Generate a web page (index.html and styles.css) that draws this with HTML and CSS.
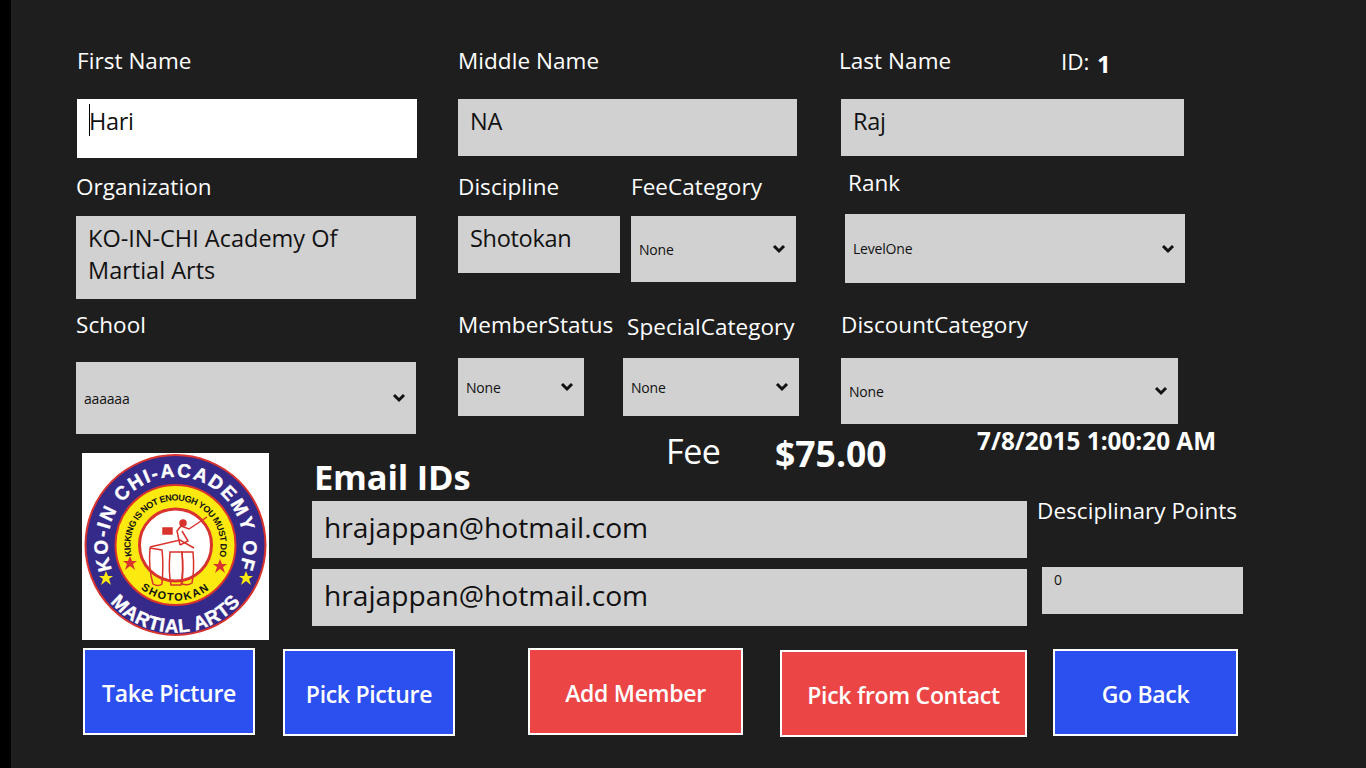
FILE: index.html
```html
<!DOCTYPE html>
<html lang="en">
<head>
    <meta charset="UTF-8">
    <meta name="viewport" content="width=device-width, initial-scale=1.0">
    <title>Member Details</title>
    <link rel="stylesheet" href="styles.css">
</head>
<body>
    <main class="page">
        <section class="form-top">
            <div class="col col-one">
                <label class="label first-label">First Name</label>
                <input class="text-box first-box" value="Hari">
                <label class="label org-label">Organization</label>
                <textarea class="text-box org-box">KO-IN-CHI Academy Of Martial Arts</textarea>
                <label class="label school-label">School</label>
                <div class="select school-select">
                    <select><option>aaaaaa</option></select>
                    <svg class="chevron" viewBox="0 0 14 10"><path d="M2 2l5 5 5-5"></path></svg>
                </div>
            </div>

            <div class="col col-two">
                <label class="label">Middle Name</label>
                <input class="text-box middle-box" value="NA">
                <div class="pair discipline-pair">
                    <div class="pair-left">
                        <label class="label">Discipline</label>
                        <input class="text-box discipline-box" value="Shotokan">
                    </div>
                    <div>
                        <label class="label">FeeCategory</label>
                        <div class="select fee-select">
                            <select><option>None</option></select>
                            <svg class="chevron" viewBox="0 0 14 10"><path d="M2 2l5 5 5-5"></path></svg>
                        </div>
                    </div>
                </div>
                <div class="pair status-pair">
                    <div class="status-col">
                        <label class="label">MemberStatus</label>
                        <div class="select status-select">
                            <select><option>None</option></select>
                            <svg class="chevron" viewBox="0 0 14 10"><path d="M2 2l5 5 5-5"></path></svg>
                        </div>
                    </div>
                    <div>
                        <label class="label special-label">SpecialCategory</label>
                        <div class="select special-select">
                            <select><option>None</option></select>
                            <svg class="chevron" viewBox="0 0 14 10"><path d="M2 2l5 5 5-5"></path></svg>
                        </div>
                    </div>
                </div>
            </div>

            <div class="col col-three">
                <div class="name-row">
                    <label class="label last-label">Last Name</label>
                    <span class="id-label">ID:</span>
                    <span class="id-value">1</span>
                </div>
                <input class="text-box last-box" value="Raj">
                <label class="label rank-label">Rank</label>
                <div class="select rank-select">
                    <select><option>LevelOne</option></select>
                    <svg class="chevron" viewBox="0 0 14 10"><path d="M2 2l5 5 5-5"></path></svg>
                </div>
                <label class="label discount-label">DiscountCategory</label>
                <div class="select discount-select">
                    <select><option>None</option></select>
                    <svg class="chevron" viewBox="0 0 14 10"><path d="M2 2l5 5 5-5"></path></svg>
                </div>
            </div>
        </section>

        <section class="form-bottom">
            <svg class="logo" viewBox="0 0 187 187" role="img" aria-label="KO-IN CHI Academy of Martial Arts">
                <defs>
                    <path id="arcTop" d="M 30.7 118 A 68 68 0 1 1 156.3 118"></path>
                    <path id="arcBottom" d="M 13 122 A 85 85 0 0 0 174 122"></path>
                    <path id="arcInnerTop" d="M 50 104 A 45 45 0 1 1 137 104"></path>
                    <path id="arcInnerBottom" d="M 50 127 A 56 56 0 0 0 137 127"></path>
                    <polygon id="star" points="0,-7 2,-2 7,-2 3,1 5,7 0,3 -5,7 -3,1 -7,-2 -2,-2"></polygon>
                </defs>
                <rect width="187" height="187" fill="#fff"></rect>
                <circle cx="93.5" cy="92" r="90" fill="#35298a" stroke="#d9332e" stroke-width="2"></circle>
                <circle cx="93.5" cy="92" r="60" fill="#fbe90f" stroke="#d9332e" stroke-width="2"></circle>
                <circle cx="93.5" cy="92" r="36" fill="#fff" stroke="#d9332e" stroke-width="3"></circle>
                <text class="logo-ring logo-ring-top"><textPath href="#arcTop" startOffset="50%" text-anchor="middle">KO-IN CHI-ACADEMY OF</textPath></text>
                <text class="logo-ring"><textPath href="#arcBottom" startOffset="50%" text-anchor="middle">MARTIAL ARTS</textPath></text>
                <text class="logo-motto"><textPath href="#arcInnerTop" startOffset="50%" text-anchor="middle">KICKING IS NOT ENOUGH YOU MUST DO</textPath></text>
                <text class="logo-style"><textPath href="#arcInnerBottom" startOffset="50%" text-anchor="middle">SHOTOKAN</textPath></text>
                <use href="#star" x="24" y="125" fill="#fbe90f"></use>
                <use href="#star" x="164" y="125" fill="#fbe90f"></use>
                <use href="#star" x="48" y="110" fill="#d9332e"></use>
                <use href="#star" x="138" y="113" fill="#d9332e"></use>
                <g class="logo-sketch">
                    <path d="M68 95c-1 12 0 26 3 36 3 2 7 2 9 0 1-12 1-26 0-34z"></path>
                    <path d="M88 99c-1 12-1 24 1 33h10c2-10 2-22 1-33z"></path>
                    <path d="M100 99c1 12 1 22 0 32 3 1 7 1 10-1 2-10 2-20 1-31z"></path>
                    <path d="M68 94l30-7 14 8"></path>
                    <path d="M98 92l-3-14 4-5 8 3 18-12"></path>
                    <path d="M100 78l6 10-8 4"></path>
                    <circle class="logo-head" cx="101" cy="70" r="3"></circle>
                    <rect class="logo-head" x="81" y="75" width="9" height="6"></rect>
                </g>
            </svg>

            <div class="details">
                <div class="summary">
                    <h2 class="email-title">Email IDs</h2>
                    <span class="fee-label">Fee</span>
                    <span class="fee-value">$75.00</span>
                    <span class="stamp">7/8/2015 1:00:20 AM</span>
                </div>
                <div class="contact-row">
                    <div class="email-list">
                        <input class="text-box email-box" value="hrajappan@hotmail.com">
                        <input class="text-box email-box" value="hrajappan@hotmail.com">
                    </div>
                    <div class="points">
                        <label class="label">Desciplinary Points</label>
                        <input class="text-box points-box" value="0">
                    </div>
                </div>
            </div>
        </section>

        <section class="actions">
            <button class="action blue take-btn">Take Picture</button>
            <button class="action blue pick-btn">Pick Picture</button>
            <button class="action red add-btn">Add Member</button>
            <button class="action red contact-btn">Pick from Contact</button>
            <button class="action blue back-btn">Go Back</button>
        </section>
    </main>
</body>
</html>
```

FILE: styles.css
```css
:root {
    --page-bg: #1e1e1e;
    --box-bg: #d1d1d1;
    --box-text: #111;
    --blue: #2c50f0;
    --red: #ec4545;
}

* {
    margin: 0;
    padding: 0;
    box-sizing: border-box;
}

body {
    font-family: 'Open Sans', 'Noto Sans', Arial, sans-serif;
    background-color: var(--page-bg);
    color: #fff;
    height: 768px;
    overflow: hidden;
}

.page {
    height: 768px;
    border-left: 11px solid #000;
}

/* top three columns */
.form-top {
    display: flex;
    height: 434px;
    padding: 46px 0 0 65px;
}

.col {
    display: flex;
    flex-direction: column;
    align-items: flex-start;
}

.col-one {
    width: 382px;
}

.col-two {
    width: 381px;
}

.label {
    display: block;
    font-size: 22.5px;
    line-height: 30px;
    height: 30px;
    white-space: nowrap;
    letter-spacing: 0.05px;
}

.text-box {
    display: block;
    border: none;
    border-radius: 0;
    outline: none;
    resize: none;
    overflow: hidden;
    background-color: var(--box-bg);
    color: var(--box-text);
    font-family: inherit;
    font-size: 23.5px;
    letter-spacing: -0.3px;
    padding: 0 12px 13px;
    height: 57px;
}

.first-label {
    margin-left: 1px;
}

.first-box {
    margin: 23px 0 0 1px;
    width: 340px;
    height: 59px;
    padding-bottom: 15px;
    background: linear-gradient(#000, #000) no-repeat 12px 5px / 1px 32px, #fff;
}

.org-label {
    margin-top: 14px;
}

.org-box {
    margin-top: 14px;
    width: 340px;
    height: 83px;
    line-height: 32px;
    letter-spacing: 0;
    padding: 6px 12px 0;
}

.school-label {
    margin-top: 11px;
}

/* dropdowns */
.select {
    position: relative;
}

.select select {
    display: block;
    width: 100%;
    height: 100%;
    border: none;
    border-radius: 0;
    outline: none;
    appearance: none;
    background-color: var(--box-bg);
    color: var(--box-text);
    font-family: inherit;
    font-size: 14px;
    letter-spacing: -0.2px;
    padding-left: 8px;
}

.chevron {
    position: absolute;
    top: 50%;
    right: 10px;
    width: 14px;
    height: 10px;
    margin-top: -5px;
    fill: none;
    stroke: #111;
    stroke-width: 3;
    pointer-events: none;
}

.school-select {
    margin-top: 22px;
    width: 340px;
    height: 72px;
}

.middle-box {
    margin-top: 23px;
    width: 339px;
}

.pair {
    display: flex;
}

.discipline-pair {
    margin-top: 16px;
}

.pair-left {
    width: 173px;
}

.discipline-box {
    margin-top: 14px;
    width: 162px;
}

.fee-select {
    margin-top: 14px;
    width: 165px;
    height: 66px;
}

.status-pair {
    margin-top: 28px;
}

.status-col {
    width: 165px;
}

.status-select {
    margin-top: 18px;
    width: 126px;
    height: 58px;
}

.special-label {
    margin: 2px 0 0 4px;
}

.special-select {
    margin-top: 16px;
    width: 176px;
    height: 58px;
}

.name-row {
    display: flex;
    align-items: center;
    height: 30px;
}

.last-label {
    width: 222px;
}

.id-label {
    font-size: 22.5px;
    width: 36px;
}

.id-value {
    font-size: 24px;
    font-weight: 700;
    margin-top: 5px;
}

.last-box {
    margin: 23px 0 0 2px;
    width: 343px;
}

.rank-label {
    margin: 12px 0 0 9px;
}

.rank-select {
    margin: 16px 0 0 6px;
    width: 340px;
    height: 69px;
}

.discount-label {
    margin: 27px 0 0 2px;
}

.discount-select {
    margin: 18px 0 0 2px;
    width: 337px;
    height: 66px;
}

/* logo, email ids and fee */
.form-bottom {
    display: flex;
    height: 214px;
    padding-left: 71px;
}

.logo {
    width: 187px;
    height: 187px;
    margin-top: 19px;
    flex: none;
}

.logo-ring {
    font-family: 'Liberation Sans', Arial, sans-serif;
    font-size: 19px;
    font-weight: 700;
    fill: #fff;
    stroke: #fff;
    stroke-width: 0.4;
    letter-spacing: 0.6px;
}

.logo-ring-top {
    letter-spacing: 1.9px;
}

.logo-motto {
    font-family: 'Liberation Sans', Arial, sans-serif;
    font-size: 9px;
    font-weight: 700;
    fill: #111;
    letter-spacing: -0.5px;
}

.logo-style {
    font-family: 'Liberation Sans', Arial, sans-serif;
    font-size: 11px;
    font-weight: 700;
    fill: #111;
    letter-spacing: 1.5px;
}

.logo-sketch {
    fill: none;
    stroke: #d9332e;
    stroke-width: 1.5;
}

.logo-head {
    fill: #d9332e;
}

.details {
    margin-left: 43px;
    width: 940px;
}

.summary {
    display: flex;
    height: 67px;
    white-space: nowrap;
}

.email-title {
    width: 352px;
    margin: 23px 0 0 2px;
    font-size: 34.5px;
    line-height: 40px;
    letter-spacing: -0.2px;
}

.fee-label {
    width: 109px;
    font-size: 34px;
    line-height: 40px;
    margin-top: -3px;
    letter-spacing: -0.4px;
}

.fee-value {
    width: 202px;
    font-size: 35.5px;
    font-weight: 700;
    line-height: 40px;
    margin-top: -1px;
}

.stamp {
    font-size: 24.3px;
    font-weight: 700;
    line-height: 30px;
    margin-top: -8px;
}

.contact-row {
    display: flex;
}

.email-list {
    width: 725px;
}

.email-box {
    width: 715px;
    font-size: 28.2px;
    letter-spacing: 0;
    padding-bottom: 6px;
    margin-bottom: 11px;
}

.points {
    margin-top: -5px;
}

.points-box {
    margin: 41px 0 0 5px;
    width: 201px;
    height: 47px;
    font-size: 14px;
    padding: 0 12px 22px;
}

/* bottom buttons */
.actions {
    display: flex;
    align-items: flex-start;
    padding-left: 72px;
}

.action {
    height: 87px;
    border: 2px solid #fff;
    padding-top: 2px;
    color: #fff;
    font-family: inherit;
    font-size: 23px;
    font-weight: 600;
    letter-spacing: -0.3px;
}

.blue {
    background-color: var(--blue);
}

.red {
    background-color: var(--red);
}

.take-btn {
    width: 172px;
}

.pick-btn {
    width: 172px;
    margin: 1px 0 0 28px;
}

.add-btn {
    width: 215px;
    margin-left: 73px;
}

.contact-btn {
    width: 247px;
    margin: 2px 0 0 37px;
}

.back-btn {
    width: 185px;
    margin: 1px 0 0 26px;
}
```
